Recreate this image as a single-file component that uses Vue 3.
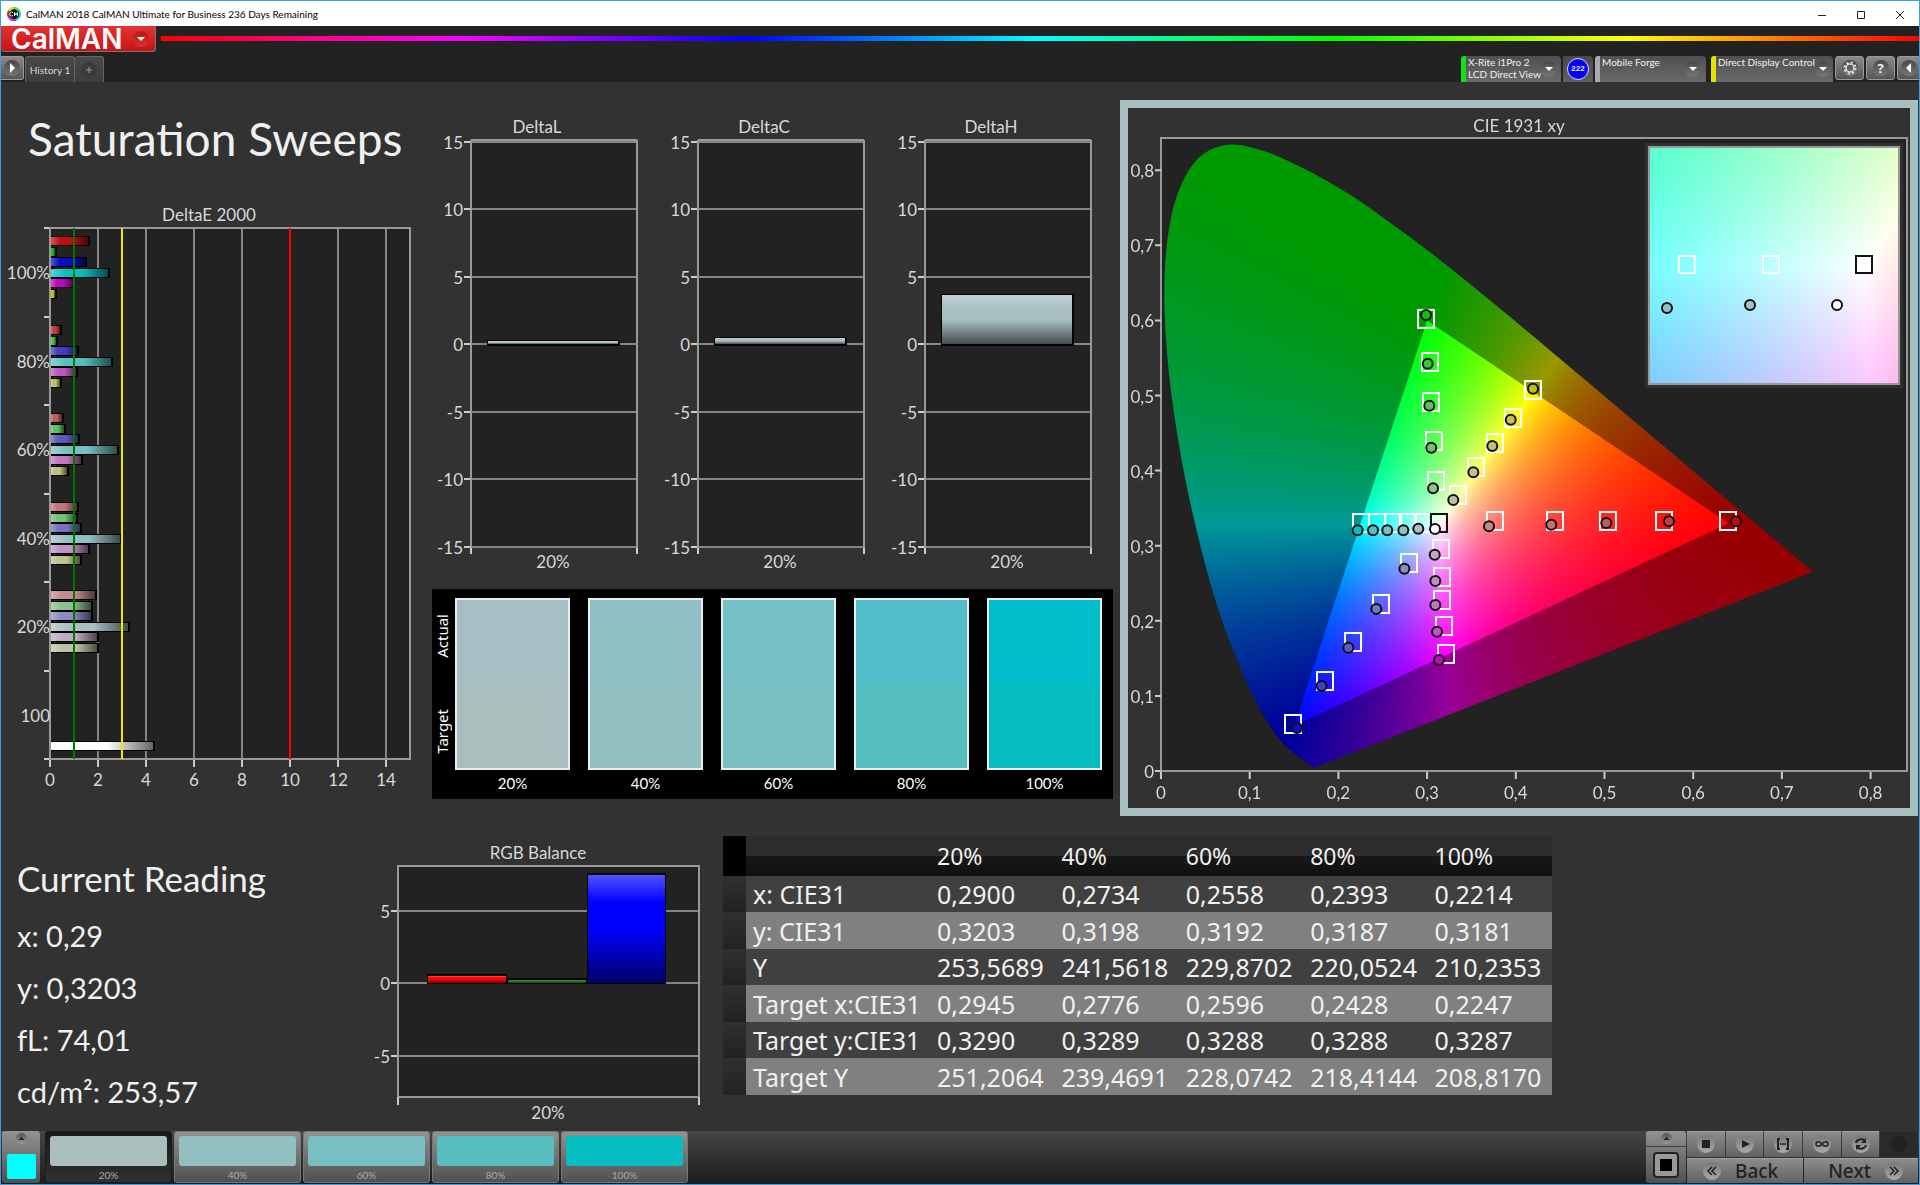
<script setup>
import { onMounted, ref } from 'vue'

const levels = [20, 40, 60, 80, 100]

/* Strength of the unsaturated channels for each saturation level */
const secondary = { 20: 168, 40: 145, 60: 119, 80: 85, 100: 8 }
const primary = { 20: 140, 40: 116, 60: 92, 80: 64, 100: 12 }

function colour(hue, level) {
  const s = secondary[level]
  const p = primary[level]
  const m = 192
  const table = {
    r: [m, p, p],
    g: [p, m, p],
    b: [p, p, m],
    c: [s, m, m],
    m: [m, s, m],
    y: [m, m, s]
  }
  return `rgb(${table[hue].join(',')})`
}

/* DeltaE 2000 horizontal bars */
const deX = (v) => 49 + v * 24
const deGroups = [
  { label: '100%', level: 100, values: [1.63, 0.24, 1.5, 2.47, 1.02, 0.24] },
  { label: '80%', level: 80, values: [0.45, 0.31, 1.15, 2.6, 1.14, 0.45] },
  { label: '60%', level: 60, values: [0.56, 0.62, 1.21, 2.82, 1.35, 0.75] },
  { label: '40%', level: 40, values: [1.15, 1.12, 1.28, 2.96, 1.62, 1.28] },
  { label: '20%', level: 20, values: [1.91, 1.74, 1.74, 3.29, 2, 2] },
  { label: '100', level: 100, values: [] }
]
const deTop = (i) => Math.round(28 + i * 88.5)
const deBars = deGroups.flatMap((g, gi) =>
  g.values.map((v, i) => ({
    y: Math.round(deTop(gi) + 8 + i * 10.5),
    w: Math.round(v * 24),
    fill: colour('rgbcmy'[i], g.level)
  }))
)
deBars.push({ y: 541, w: 104, fill: '#fff' })
const deTicks = [0, 2, 4, 6, 8, 10, 12, 14]

/* DeltaL, DeltaC and DeltaH columns */
const deltas = [
  { name: 'DeltaL', value: 0.2 },
  { name: 'DeltaC', value: 0.45 },
  { name: 'DeltaH', value: 3.6 }
]
const dTicks = [15, 10, 5, 0, -5, -10, -15]
const dY = (v) => Math.round(232 - v * 13.5)

/* Actual against target swatches */
const swatches = [
  { level: 20, actual: '#a7bec4', target: '#a9bebd' },
  { level: 40, actual: '#90bfc5', target: '#92bfbf' },
  { level: 60, actual: '#75bfc6', target: '#77bfc1' },
  { level: 80, actual: '#51bec9', target: '#56bebf' },
  { level: 100, actual: '#00bfcb', target: '#06bec1' }
]

/* CIE diagram */
const px = (x) => 33 + x * 887
const py = (y) => 663 - y * 751
const cieTicks = [0, 1, 2, 3, 4, 5, 6, 7, 8]
const dec = (n) => (n === 0 ? '0' : '0,' + n)

const locus = [
  [0.1741, 0.005], [0.1726, 0.0048], [0.1689, 0.0069], [0.1644, 0.0109], [0.1566, 0.0177],
  [0.144, 0.0297], [0.1355, 0.0399], [0.1241, 0.0578], [0.1096, 0.0868], [0.0913, 0.1327],
  [0.0687, 0.2007], [0.0454, 0.295], [0.0235, 0.4127], [0.0082, 0.5384], [0.0039, 0.6548],
  [0.0139, 0.7502], [0.0389, 0.812], [0.0743, 0.8338], [0.1142, 0.8262], [0.1547, 0.8059],
  [0.1929, 0.7816], [0.2296, 0.7543], [0.3016, 0.6923], [0.3731, 0.6245], [0.4441, 0.5547],
  [0.5125, 0.4866], [0.5752, 0.4242], [0.627, 0.3725], [0.6658, 0.334], [0.6915, 0.3083],
  [0.719, 0.2809], [0.7347, 0.2653]
]
const gamut = [[0.64, 0.33], [0.3, 0.6], [0.15, 0.06]]

const targets = [
  [0.2988, 0.602], [0.3033, 0.5446], [0.3044, 0.4913], [0.3078, 0.4394], [0.31, 0.3862],
  [0.4194, 0.5073], [0.3968, 0.47], [0.3765, 0.4367], [0.3551, 0.4048], [0.3348, 0.3675],
  [0.3765, 0.3329], [0.4442, 0.3329], [0.5039, 0.3329], [0.5671, 0.3329], [0.6392, 0.3329],
  [0.2255, 0.3302], [0.2435, 0.3302], [0.2616, 0.3302], [0.2785, 0.3302], [0.2954, 0.3302],
  [0.3157, 0.2956], [0.3168, 0.2583], [0.3168, 0.2277], [0.3191, 0.1931], [0.3213, 0.1558],
  [0.2796, 0.277], [0.248, 0.2224], [0.2165, 0.1718], [0.1849, 0.1198], [0.1488, 0.0626]
]
const measured = {
  g: [[0.3067, 0.3764], [0.3047, 0.4305], [0.3025, 0.4864], [0.3007, 0.5424], [0.2988, 0.6072]],
  y: [[0.3295, 0.3609], [0.3521, 0.3977], [0.3735, 0.4328], [0.3943, 0.4678], [0.4194, 0.5091]],
  r: [[0.3698, 0.3258], [0.44, 0.328], [0.502, 0.3302], [0.5727, 0.3325], [0.6483, 0.3325]],
  c: [[0.2901, 0.3227], [0.2732, 0.3205], [0.2551, 0.3205], [0.239, 0.3205], [0.2217, 0.3205]],
  m: [[0.3086, 0.288], [0.3093, 0.253], [0.3093, 0.221], [0.3112, 0.1855], [0.3134, 0.1478]],
  b: [[0.2744, 0.2694], [0.2427, 0.2157], [0.2112, 0.1642], [0.181, 0.1132], [0.1533, 0.0573]]
}
const points = Object.entries(measured).flatMap(([hue, list]) =>
  list.map(([x, y], i) => ({ x: px(x), y: py(y), fill: colour(hue, levels[i]) }))
)

const inset = { x: 521, y: 39, w: 250, h: 237 }
const insetTargets = [[559, 157], [643, 157]]
const insetPoints = [
  { x: 539, y: 200, fill: colour('c', 40) },
  { x: 622, y: 197, fill: colour('c', 20) },
  { x: 709, y: 197, fill: '#fff' }
]

const canvas = ref(null)

function chroma(x, y) {
  const X = x / y
  const Z = (1 - x - y) / y
  const rgb = [
    3.2406 * X - 1.5372 - 0.4986 * Z,
    -0.9689 * X + 1.8758 + 0.0415 * Z,
    0.0557 * X - 0.204 + 1.057 * Z
  ].map((v) => Math.max(0, v))
  const top = Math.max(...rgb)
  return rgb.map((v) => (v / top) * 255)
}

function field(w, h, toX, toY, gain) {
  const layer = document.createElement('canvas')
  layer.width = w
  layer.height = h
  const ctx = layer.getContext('2d')
  const data = ctx.createImageData(w, h)
  for (let j = 0; j < h; j++) {
    for (let i = 0; i < w; i++) {
      const c = chroma(toX(i), Math.max(0.001, toY(j)))
      const o = (j * w + i) * 4
      data.data[o] = c[0] * gain
      data.data[o + 1] = c[1] * gain
      data.data[o + 2] = c[2] * gain
      data.data[o + 3] = 255
    }
  }
  ctx.putImageData(data, 0, 0)
  return layer
}

function paintInside(ctx, outline, layer) {
  ctx.save()
  ctx.beginPath()
  outline.forEach(([x, y]) => ctx.lineTo(px(x), py(y)))
  ctx.closePath()
  ctx.clip()
  ctx.drawImage(layer, 0, 0)
  ctx.restore()
}

/* Rounds the spectral locus with a Catmull-Rom curve */
function smooth(list) {
  const out = []
  for (let i = 0; i < list.length - 1; i++) {
    const p = [list[Math.max(0, i - 1)], list[i], list[i + 1], list[Math.min(list.length - 1, i + 2)]]
    for (let s = 0; s < 8; s++) {
      const t = s / 8
      out.push([0, 1].map((k) => 0.5 * (2 * p[1][k] + (p[2][k] - p[0][k]) * t +
        (2 * p[0][k] - 5 * p[1][k] + 4 * p[2][k] - p[3][k]) * t * t +
        (3 * p[1][k] - p[0][k] - 3 * p[2][k] + p[3][k]) * t * t * t)))
    }
  }
  out.push(list[list.length - 1])
  return out
}

onMounted(() => {
  const ctx = canvas.value.getContext('2d')
  const toX = (i) => (i - 33) / 887
  const toY = (j) => (663 - j) / 751
  ctx.fillStyle = '#222'
  ctx.fillRect(33, 30, 746, 633)
  paintInside(ctx, smooth(locus), field(782, 700, toX, toY, 0.6))
  paintInside(ctx, gamut, field(782, 700, toX, toY, 1))
  ctx.fillStyle = '#303030'
  ctx.fillRect(inset.x - 4, inset.y - 4, inset.w + 8, inset.h + 8)
  const zoomed = field(inset.w, inset.h, (i) => 0.2705 + i / 5110, (j) => 0.3547 - j / 4600, 1)
  ctx.drawImage(zoomed, inset.x, inset.y)
})

/* RGB balance */
const rgbY = (v) => Math.round(143 - v * 14.5)
const rgbBars = [
  { x: 56, y: 135, h: 9, w: 80, fill: '#f00' },
  { x: 136, y: 139, h: 5, w: 80, fill: '#1c7a1c' },
  { x: 216, y: 34, h: 110, w: 79, fill: '#00f' }
]

const readings = ['x: 0,29', 'y: 0,3203', 'fL: 74,01', 'cd/m²: 253,57']

const rows = [
  ['x: CIE31', '0,2900', '0,2734', '0,2558', '0,2393', '0,2214'],
  ['y: CIE31', '0,3203', '0,3198', '0,3192', '0,3187', '0,3181'],
  ['Y', '253,5689', '241,5618', '229,8702', '220,0524', '210,2353'],
  ['Target x:CIE31', '0,2945', '0,2776', '0,2596', '0,2428', '0,2247'],
  ['Target y:CIE31', '0,3290', '0,3289', '0,3288', '0,3288', '0,3287'],
  ['Target Y', '251,2064', '239,4691', '228,0742', '218,4144', '208,8170']
]
</script>

<template>
  <div class="window">
    <header class="titlebar">
      <svg class="app-icon" viewBox="0 0 14 14">
        <circle cx="7" cy="7" r="6" fill="#111" stroke="#14c8c8" stroke-width="2" />
        <path d="M7 1a6 6 0 0 1 5 3" fill="none" stroke="#3cf03c" stroke-width="2" />
        <path d="M2 4a6 6 0 0 1 5-3" fill="none" stroke="#e8e020" stroke-width="2" />
        <path d="M2 10a6 6 0 0 1 0-6" fill="none" stroke="#e02020" stroke-width="2" />
        <path d="M9 13a6 6 0 0 1-7-3" fill="none" stroke="#d020d0" stroke-width="2" />
        <path d="M6 5.500a2 2 0 1 0 0 3M7.500 9V5.500L9 8l1.500-2.500V9" fill="none" stroke="#fff" />
      </svg>
      <span class="caption">CalMAN 2018 CalMAN Ultimate for Business 236 Days Remaining</span>
      <div class="controls">
        <button aria-label="Minimize"><svg viewBox="0 0 10 10"><path d="M1 5.500h8" /></svg></button>
        <button aria-label="Maximize"><svg viewBox="0 0 10 10"><path d="M1.500 1.500h7v7h-7z" /></svg></button>
        <button aria-label="Close"><svg viewBox="0 0 10 10"><path d="M1 1l8 8M9 1l-8 8" /></svg></button>
      </div>
    </header>

    <div class="brandbar">
      <button class="logo">
        <span>CalMAN</span>
        <i class="knob red"><svg viewBox="0 0 10 10"><path d="M1 3h8L5 7z" fill="#fff" /></svg></i>
      </button>
      <div class="rainbow"></div>
    </div>

    <nav class="tabbar">
      <button class="square first" aria-label="Open panel">
        <i class="knob"><svg viewBox="0 0 10 10"><path d="M3 0l5 5-5 5z" fill="#fff" /></svg></i>
      </button>
      <button class="tab">History 1</button>
      <button class="tab plus" aria-label="Add history">
        <i class="knob dark"><svg viewBox="0 0 10 10"><path d="M5 2v6M2 5h6" stroke="#999" /></svg></i>
      </button>
      <div class="devices">
        <button class="device meter">
          <span>X-Rite i1Pro 2<br />LCD Direct View</span>
          <i class="knob"><svg viewBox="0 0 10 10"><path d="M1 3h8L5 7z" fill="#fff" /></svg></i>
        </button>
        <div class="badge-box"><b>222</b></div>
        <button class="device source">
          <span>Mobile Forge</span>
          <i class="knob"><svg viewBox="0 0 10 10"><path d="M1 3h8L5 7z" fill="#fff" /></svg></i>
        </button>
        <button class="device display">
          <span>Direct Display Control</span>
          <i class="knob"><svg viewBox="0 0 10 10"><path d="M1 3h8L5 7z" fill="#fff" /></svg></i>
        </button>
        <button class="square" aria-label="Settings">
          <i class="knob big"><svg viewBox="0 0 16 16"><circle cx="8" cy="8" r="4" fill="none" stroke="#ddd" stroke-width="1.500" /><circle cx="8" cy="8" r="5.500" fill="none" stroke="#ddd" stroke-width="2" stroke-dasharray="2.200 2.120" /></svg></i>
        </button>
        <button class="square" aria-label="Help"><i class="knob big help">?</i></button>
        <button class="square last" aria-label="Close panel">
          <i class="knob big"><svg viewBox="0 0 16 16"><path d="M10 3v10L5 8z" fill="#fff" /></svg></i>
        </button>
      </div>
    </nav>

    <main class="workspace">
      <svg class="defs" width="0" height="0">
        <defs>
          <linearGradient id="sheenX">
            <stop offset="0" stop-color="#fff" stop-opacity=".3" />
            <stop offset=".25" stop-color="#fff" stop-opacity="0" />
            <stop offset=".55" stop-color="#000" stop-opacity="0" />
            <stop offset="1" stop-color="#000" stop-opacity=".6" />
          </linearGradient>
          <linearGradient id="sheenY" x2="0" y2="1">
            <stop offset="0" stop-color="#fff" stop-opacity=".32" />
            <stop offset=".25" stop-color="#fff" stop-opacity="0" />
            <stop offset=".5" stop-color="#000" stop-opacity="0" />
            <stop offset="1" stop-color="#000" stop-opacity=".6" />
          </linearGradient>
        </defs>
      </svg>

      <section class="upper">
        <div class="col-left">
          <h1>Saturation Sweeps</h1>
          <svg class="chart" viewBox="0 0 431 600" role="img" aria-label="DeltaE 2000">
            <text x="208" y="21" class="mid">DeltaE 2000</text>
            <rect x="49" y="28" width="360" height="531" class="plot" />
            <path v-for="t in deTicks.slice(1)" :key="'g' + t" :d="`M${deX(t)} 28V559`" class="grid" />
            <path v-for="t in deTicks" :key="'t' + t" :d="`M${deX(t)} 559v8`" class="tick" />
            <path v-for="i in 7" :key="'y' + i" :d="`M43 ${deTop(i - 1)}h6`" class="tick" />
            <path d="M49 28V559H409V28z" class="frame" />
            <g v-for="(b, i) in deBars" :key="'b' + i">
              <rect x="50" :y="b.y" :width="b.w" height="10" fill="#000" />
              <rect x="50" :y="b.y + 1" :width="b.w - 2" height="8" :fill="b.fill" />
              <rect x="50" :y="b.y + 1" :width="b.w - 2" height="8" fill="url(#sheenX)" />
            </g>
            <path d="M73 28V559" stroke="#007800" stroke-width="2" />
            <path d="M121 28V559" stroke="#f0e800" stroke-width="2" />
            <path d="M289 28V559" stroke="#f00" stroke-width="2" />
            <text v-for="(g, i) in deGroups" :key="g.label + i" x="49" :y="deTop(i) + 51" class="end">{{ g.label }}</text>
            <text v-for="t in deTicks" :key="'l' + t" :x="deX(t)" y="586" class="mid">{{ t }}</text>
          </svg>
        </div>

        <div class="col-mid">
          <div class="deltas">
            <svg v-for="d in deltas" :key="d.name" class="chart" viewBox="0 0 227 477" role="img" :aria-label="d.name">
              <text x="105" y="21" class="mid">{{ d.name }}</text>
              <rect x="39" y="28" width="166" height="408" class="plot" />
              <g v-for="t in dTicks" :key="t">
                <path :d="`M39 ${dY(t)}h166`" class="grid" />
                <path :d="`M32 ${dY(t)}h7`" class="tick" />
                <text x="31" :y="dY(t) + 7" class="end">{{ t }}</text>
              </g>
              <path d="M39 28V436M205 28V436M39 28H205" class="frame" />
              <path d="M39 436v6M205 436v6" class="tick" />
              <rect x="55" :y="dY(d.value) - 1" width="133" :height="235 - dY(d.value)" fill="#000" />
              <rect x="56" :y="dY(d.value)" width="130" :height="232 - dY(d.value)" fill="#a8c0c2" />
              <rect x="56" :y="dY(d.value)" width="130" :height="232 - dY(d.value)" fill="url(#sheenY)" />
              <text x="121" y="456" class="mid">20%</text>
            </svg>
          </div>
          <div class="compare">
            <div class="sides"><span>Actual</span><span>Target</span></div>
            <figure v-for="s in swatches" :key="s.level">
              <div class="pair">
                <div :style="{ background: s.actual }"></div>
                <div :style="{ background: s.target }"></div>
              </div>
              <figcaption>{{ s.level }}%</figcaption>
            </figure>
          </div>
        </div>

        <div class="col-right">
          <div class="cie">
            <canvas ref="canvas" width="782" height="700"></canvas>
            <svg class="chart" viewBox="0 0 782 700" role="img" aria-label="CIE 1931 xy">
              <text x="391" y="24" class="mid">CIE 1931 xy</text>
              <path d="M33 30V663H779V30z" class="frame" />
              <g v-for="n in cieTicks" :key="n">
                <path :d="`M${px(n / 10)} 664v7M27 ${py(n / 10)}h6`" class="tick" />
                <text :x="px(n / 10)" y="691" class="mid">{{ dec(n) }}</text>
                <text x="26" :y="py(n / 10) + 7" class="end">{{ dec(n) }}</text>
              </g>
              <rect v-for="(t, i) in targets" :key="'t' + i" :x="px(t[0]) - 8" :y="py(t[1]) - 9" width="16" height="18" class="target" />
              <rect x="303" y="406" width="16" height="18" class="target black" />
              <circle v-for="(p, i) in points" :key="'p' + i" :cx="p.x" :cy="p.y" r="5" :fill="p.fill" class="point" />
              <circle cx="307" cy="421" r="5" fill="#fff" class="point" />
              <rect :x="inset.x" :y="inset.y" :width="inset.w" :height="inset.h" class="frame" />
              <rect v-for="t in insetTargets" :key="t[0]" :x="t[0] - 8" :y="t[1] - 9" width="16" height="17" class="target" />
              <rect x="728" y="148" width="16" height="17" class="target black white-fill" />
              <circle v-for="p in insetPoints" :key="p.x" :cx="p.x" :cy="p.y" r="5" :fill="p.fill" class="point" />
            </svg>
          </div>
        </div>
      </section>

      <section class="lower">
        <div class="reading">
          <h2>Current Reading</h2>
          <p v-for="r in readings" :key="r">{{ r }}</p>
        </div>
        <div class="balance">
          <svg class="chart" viewBox="0 0 352 291" role="img" aria-label="RGB Balance">
            <text x="167" y="19" class="mid">RGB Balance</text>
            <rect x="27" y="26" width="301" height="231" class="plot" />
            <g v-for="t in [5, 0, -5]" :key="t">
              <path :d="`M27 ${rgbY(t)}h301`" class="grid" />
              <path :d="`M20 ${rgbY(t)}h7`" class="tick" />
              <text x="19" :y="rgbY(t) + 7" class="end">{{ t }}</text>
            </g>
            <path d="M27 26H328V257H27z" class="frame" />
            <path d="M27 257v8M328 257v8" class="tick" />
            <g v-for="b in rgbBars" :key="b.x">
              <rect :x="b.x" :y="b.y - 1" :width="b.w" :height="b.h + 1" fill="#000" />
              <rect :x="b.x + 1" :y="b.y + 1" :width="b.w - 2" :height="b.h - 2" :fill="b.fill" />
              <rect :x="b.x + 1" :y="b.y + 1" :width="b.w - 2" :height="b.h - 2" fill="url(#sheenY)" />
            </g>
            <text x="177" y="279" class="mid">20%</text>
          </svg>
        </div>
        <table>
          <thead>
            <tr><th class="stub"></th><th class="name"></th><th v-for="l in levels" :key="l">{{ l }}%</th></tr>
          </thead>
          <tbody>
            <tr v-for="r in rows" :key="r[0]"><td class="stub"></td><td v-for="(c, i) in r" :key="i">{{ c }}</td></tr>
          </tbody>
        </table>
      </section>
    </main>

    <footer class="bottombar">
      <button class="metal current" aria-label="Current colour">
        <i class="knob small"><svg viewBox="0 0 10 10"><path d="M1 7h8L5 2z" fill="#222" /></svg></i>
        <span class="cyan"></span>
      </button>
      <div class="patches">
        <button v-for="s in swatches" :key="s.level" class="patch" :class="{ on: s.level === 20 }">
          <span :style="{ background: s.target }"></span>
          <em>{{ s.level }}%</em>
        </button>
      </div>
      <div class="transport">
        <div class="metal target-box">
          <button class="up" aria-label="More"><i class="knob small"><svg viewBox="0 0 10 10"><path d="M1 7h8L5 2z" fill="#222" /></svg></i></button>
          <button class="big-stop" aria-label="Pattern"><span></span></button>
        </div>
        <div class="keys">
          <div class="row">
            <button aria-label="Stop"><i class="knob light"><svg viewBox="0 0 16 16"><path d="M4 4h8v8H4z" fill="#222" /></svg></i></button>
            <button aria-label="Play"><i class="knob light"><svg viewBox="0 0 16 16"><path d="M5 4l8 4-8 4z" fill="#222" /></svg></i></button>
            <button aria-label="Range"><i class="knob light"><svg viewBox="0 0 16 16"><path d="M5 3H3v10h2M11 3h2v10h-2" fill="none" stroke="#222" stroke-width="2" /><path d="M5 8h6" stroke="#222" stroke-width="2" stroke-dasharray="1.500 .700" /></svg></i></button>
            <button aria-label="Loop"><i class="knob light"><svg viewBox="0 0 16 16"><path d="M8 8C6 5 2 5 2 8s4 3 6 0 6-3 6 0-4 3-6 0z" fill="none" stroke="#222" stroke-width="1.500" /></svg></i></button>
            <button aria-label="Refresh"><i class="knob light"><svg viewBox="0 0 16 16"><path d="M3 7a5 4 0 0 1 9-2M13 9a5 4 0 0 1-9 2" fill="none" stroke="#222" stroke-width="2" /><path d="M13 2v5H8zM3 14V9h5z" fill="#222" /></svg></i></button>
            <span class="empty"><i class="knob off"></i></span>
          </div>
          <div class="row wide">
            <button class="back"><i class="knob light"><svg viewBox="0 0 16 16"><path d="M8 4L4 8l4 4M12 4L8 8l4 4" fill="none" stroke="#222" stroke-width="1.500" /></svg></i>Back</button>
            <button class="next">Next<i class="knob light"><svg viewBox="0 0 16 16"><path d="M4 4l4 4-4 4M8 4l4 4-4 4" fill="none" stroke="#222" stroke-width="1.500" /></svg></i></button>
          </div>
        </div>
      </div>
    </footer>
  </div>
</template>

<style>
body {
  background: #323232;
}
</style>

<style scoped>
* {
  box-sizing: border-box;
}
.window {
  display: flex;
  flex-direction: column;
  min-height: 100vh;
  border: 1px solid #3a9fe0;
  background: #323232;
  color: #f0f0f0;
  font-family: Lato, "Noto Sans", sans-serif;
}
button {
  margin: 0;
  padding: 0;
  border: 0;
  background: none;
  color: inherit;
  font: inherit;
}
h1, h2, p, figure {
  margin: 0;
  font-weight: 400;
}

.titlebar {
  display: flex;
  align-items: center;
  height: 25px;
  padding-left: 6px;
  background: #fff;
  color: #111;
}
.app-icon {
  width: 14px;
  height: 14px;
  margin-right: 5px;
}
.caption {
  color: #000;
  font-size: 10px;
  line-height: 24px;
}
.controls {
  display: flex;
  margin-left: auto;
}
.controls button {
  width: 39px;
  height: 24px;
}
.controls svg {
  width: 10px;
  height: 10px;
  stroke: #222;
  fill: none;
}

.brandbar {
  display: flex;
  gap: 5px;
  height: 28px;
  background: #222;
}
.logo {
  display: flex;
  align-items: center;
  justify-content: space-between;
  width: 155px;
  height: 26px;
  padding: 0 6px 0 10px;
  border: solid #777;
  border-width: 0 1px 1px 0;
  border-radius: 0 0 4px 4px;
  background: linear-gradient(#e03434, #c81414);
  color: #fff;
  font: 600 28px/26px Inter, sans-serif;
}
.rainbow {
  flex: 1;
  height: 5px;
  margin-top: 10px;
  background: linear-gradient(90deg, #f00, #f0f, #00f, #0ff, #0f0, #ff0, #f00);
}

.knob {
  display: inline-flex;
  align-items: center;
  justify-content: center;
  flex: none;
  width: 16px;
  height: 16px;
  border-radius: 50%;
  background: linear-gradient(#484848, #777);
}
.knob svg {
  width: 10px;
  height: 10px;
}
.knob.red {
  background: linear-gradient(#b81818, #d83030);
}
.knob.dark {
  background: #3a3a3a;
}
.knob.big svg,
.knob.light svg {
  width: 16px;
  height: 16px;
}
.knob.help {
  font: 700 13px/16px "Open Sans", sans-serif;
}
.knob.small {
  width: 11px;
  height: 11px;
  background: linear-gradient(#555, #999);
}
.knob.small svg {
  width: 7px;
  height: 7px;
}
.knob.light {
  width: 18px;
  height: 18px;
  background: linear-gradient(#777, #aaa);
}
.knob.off {
  background: #222;
}

.tabbar {
  display: flex;
  align-items: flex-start;
  height: 28px;
  padding-top: 2px;
  background: #222;
  font-size: 10px;
  line-height: 12px;
}
.square {
  display: flex;
  align-items: center;
  justify-content: center;
  width: 29px;
  height: 24px;
  border: 1px solid #999;
  border-radius: 3px;
  background: linear-gradient(#8a8a8a, #555);
}
.square.first {
  width: 23px;
  border-left: 0;
  border-radius: 0 3px 3px 0;
}
.square.last {
  width: 22px;
  border-right: 0;
  border-radius: 3px 0 0 3px;
}
.tab {
  height: 26px;
  width: 50px;
  margin-left: 1px;
  border: solid #666;
  border-width: 1px 1px 0 1px;
  border-radius: 3px 3px 0 0;
  background: linear-gradient(#4a4a4a, #3c3c3c);
  color: #d8d8d8;
}
.tab.plus {
  width: 29px;
  margin-left: 0;
  border-left: 0;
}
.devices {
  display: flex;
  align-items: flex-start;
  gap: 2px;
  margin-left: auto;
}
.device {
  display: flex;
  align-items: flex-start;
  justify-content: space-between;
  height: 26px;
  padding: 0 4px 0 2px;
  border-left: 5px solid #ddd;
  border-radius: 3px 4px 0 0;
  background: linear-gradient(#505050, #6a6a6a);
  text-align: left;
  white-space: nowrap;
}
.device .knob {
  margin-top: 5px;
}
.meter {
  width: 100px;
  padding-right: 10px;
  border-color: #14e014;
}
.source {
  width: 111px;
  padding-right: 5px;
  border-color: #aaa;
}
.display {
  width: 122px;
  margin-left: 3px;
  border-color: #e8e000;
}
.badge-box {
  display: flex;
  align-items: center;
  justify-content: center;
  width: 30px;
  height: 26px;
  border-radius: 0 4px 0 0;
  background: linear-gradient(#484848, #606060);
}
.badge-box b {
  width: 22px;
  height: 22px;
  border: 1px solid #ddd;
  border-radius: 50%;
  background: #00f;
  font: 700 8px/20px "Liberation Sans", sans-serif;
  text-align: center;
}

.workspace {
  flex: 1;
}
.defs {
  position: absolute;
}
.upper {
  display: grid;
  grid-template-columns: 431fr 681fr 806fr;
}
.upper > div {
  min-width: 0;
}
h1 {
  padding: 29px 0 33px 27px;
  font-size: 46px;
  line-height: 56px;
  white-space: nowrap;
}
.chart {
  display: block;
  width: 100%;
  overflow: visible;
}
.chart text {
  fill: #d8d8d8;
  font-size: 17px;
}
.mid {
  text-anchor: middle;
}
.end {
  text-anchor: end;
}
.plot {
  fill: #222;
}
.frame {
  fill: none;
  stroke: #999;
  stroke-width: 2;
}
.grid {
  stroke: #848484;
  stroke-width: 2;
}
.tick {
  stroke: #ccc;
  stroke-width: 2;
}

.col-mid {
  padding-top: 30px;
}
.deltas {
  display: grid;
  grid-template-columns: repeat(3, 1fr);
}
.compare {
  display: flex;
  gap: 18px;
  padding: 9px 11px 6px 0;
  background: #000;
}
.sides {
  display: flex;
  flex-direction: column;
  justify-content: space-between;
  width: 23px;
  height: 172px;
  margin-right: -18px;
  padding: 16px 0;
  color: #fff;
  font: 15px/20px "Noto Sans", sans-serif;
}
.sides span {
  width: 22px;
  writing-mode: vertical-rl;
  transform: rotate(180deg);
}
.compare figure {
  flex: 1;
}
.pair {
  height: 172px;
  border: 2px solid #e8eeee;
}
.pair div {
  height: 50%;
}
figcaption {
  padding-top: 3px;
  color: #fff;
  font-size: 15px;
  line-height: 20px;
  text-align: center;
}

.col-right {
  padding: 18px 1px 0 7px;
}
.cie {
  display: grid;
  border: 8px solid #a8bfbf;
}
.cie canvas,
.cie svg {
  grid-area: 1 / 1;
  width: 100%;
}
.target {
  fill: none;
  stroke: #fff;
  stroke-width: 2;
}
.target.black {
  stroke: #111;
}
.white-fill {
  fill: #fff;
}
.point {
  stroke: #111;
  stroke-width: 2;
}

.lower {
  display: grid;
  grid-template-columns: 370fr 352fr 829fr 367fr;
  align-items: start;
  padding-top: 20px;
}
.reading {
  padding: 18px 0 0 16px;
  font-size: 29px;
  line-height: 52px;
}
h2 {
  padding-bottom: 8px;
  font-size: 35px;
  line-height: 48px;
}
.balance {
  padding-top: 4px;
}
table {
  width: 100%;
  border-collapse: collapse;
  table-layout: fixed;
  font: 25px/34px "Noto Sans", sans-serif;
}
th,
td {
  padding: 0 0 0 7px;
  font-weight: 400;
  text-align: left;
  white-space: nowrap;
}
th {
  height: 40px;
  background: linear-gradient(#2c2c2c 50%, #181818 50%, #101010);
  font-size: 23px;
}
.name {
  width: 184px;
}
td {
  height: 36px;
  background: #404040;
}
tbody tr:nth-child(even) td {
  height: 37px;
  background: #808080;
}
th.stub {
  width: 23px;
  background: #000;
}
tbody tr td.stub,
tbody tr:nth-child(even) td.stub {
  background: linear-gradient(#303030, #222);
}

.bottombar {
  display: flex;
  height: 53px;
  padding: 0 1px 1px;
  background: linear-gradient(#454545, #1c1c1c);
}
.metal {
  border-radius: 3px;
  background: linear-gradient(#929292, #505050);
}
.current {
  display: flex;
  flex-direction: column;
  align-items: center;
  justify-content: space-between;
  width: 38px;
  padding: 2px 0 4px;
}
.cyan {
  width: 29px;
  height: 25px;
  border-radius: 2px;
  background: #0ff;
}
.patches {
  display: flex;
  gap: 2px;
  margin-left: 5px;
}
.patch {
  display: flex;
  flex-direction: column;
  width: 127px;
  padding: 4px 4px 0;
  border: 1px solid #777;
  border-radius: 3px;
  background: linear-gradient(#929292, #505050);
  color: #aaa;
  font-size: 10px;
  line-height: 18px;
}
.patch.on {
  border-color: #1c1c1c;
  background: linear-gradient(#181818, #303030);
}
.patch span {
  flex: none;
  height: 30px;
  width: 100%;
  border-radius: 3px;
}
.patch em {
  width: 100%;
  font-style: normal;
  text-align: center;
}
.transport {
  display: flex;
  gap: 1px;
  margin-left: auto;
}
.target-box {
  display: flex;
  flex-direction: column;
  width: 40px;
}
.up {
  display: flex;
  justify-content: center;
  height: 16px;
  padding-top: 2px;
  border-bottom: 1px solid #444;
}
.big-stop {
  display: flex;
  align-items: center;
  justify-content: center;
  flex: 1;
}
.big-stop span {
  width: 26px;
  height: 26px;
  border: 2px solid #222;
  border-radius: 4px;
  background: linear-gradient(#000, #000) center / 12px 12px no-repeat, #999;
}
.keys {
  display: flex;
  flex-direction: column;
  gap: 1px;
  width: 231px;
}
.row {
  display: flex;
  gap: 1px;
  flex: 1;
}
.row button,
.empty {
  display: flex;
  align-items: center;
  justify-content: center;
  flex: 1;
  border-top: 1px solid #a0a0a0;
  background: linear-gradient(#8c8c8c, #626262);
}
.empty {
  border-color: #333;
  background: #2a2a2a;
}
.row.wide button {
  gap: 14px;
  color: #222;
  font: 500 19px/22px "Noto Sans", sans-serif;
}
.row.wide .back {
  justify-content: flex-start;
  padding-left: 16px;
}
.row.wide .next {
  justify-content: flex-end;
  padding-right: 15px;
}
</style>
